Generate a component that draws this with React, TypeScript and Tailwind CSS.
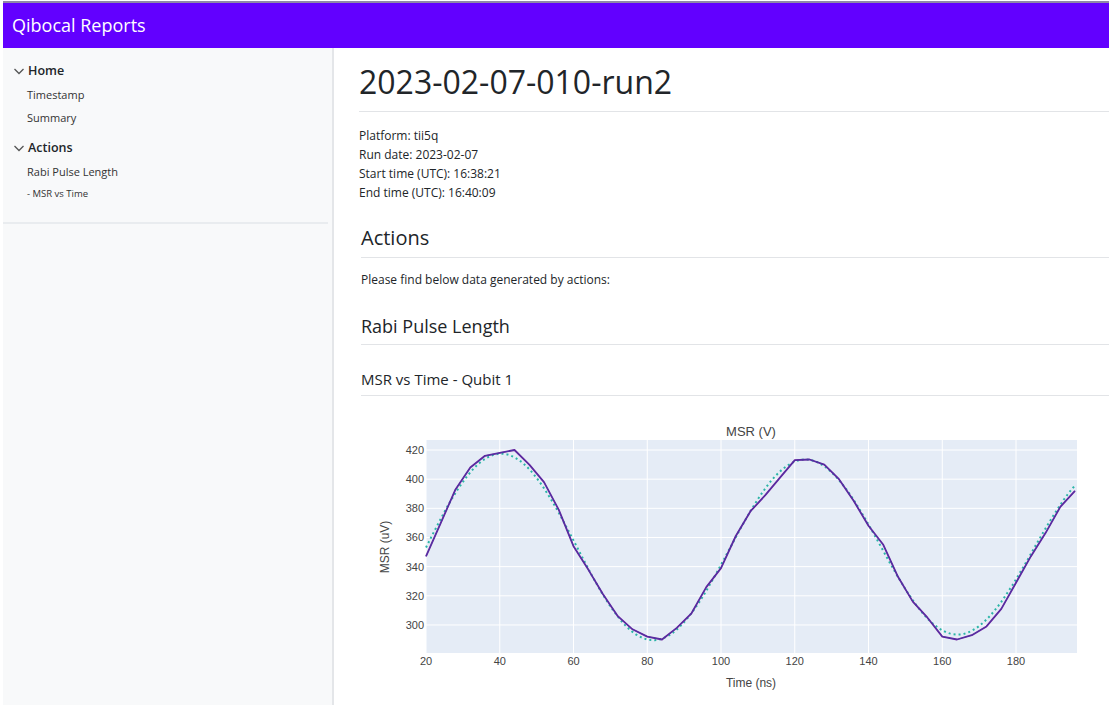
import React from "react"

const data: [number, number][] = [
  [20, 347], [24, 370], [28, 393], [32, 408], [36, 416], [40, 418], [44, 420],
  [48, 410], [52, 398], [56, 379], [60, 354], [64, 338], [68, 321], [72, 306],
  [76, 297], [80, 292], [84, 290], [88, 298], [92, 308], [96, 326], [100, 339],
  [104, 361], [108, 378], [112, 389], [116, 401], [120, 413], [124, 413.5], [128, 410],
  [132, 400], [136, 385], [140, 368], [144, 355], [148, 333], [152, 316], [156, 305],
  [160, 292], [164, 290], [168, 293], [172, 299], [176, 311], [180, 329], [184, 347],
  [188, 363], [192, 381], [196, 392],
]

// page coordinates of the plot area
const px = (t: number) => 426 + (t - 20) * 3.6875
const py = (v: number) => 450 + (420 - v) * 1.458

const fit = (t: number) => {
  const amp = 65 * Math.exp(-(t - 40) / 1300)
  return 352.5 + amp * Math.cos((2 * Math.PI * (t - 40.5)) / 82.5)
}

const dataPath = data.map(([t, v], i) => `${i ? "L" : "M"}${px(t).toFixed(1)},${py(v).toFixed(1)}`).join(" ")
const fitPath = Array.from({ length: 177 }, (_, i) => 20 + i)
  .map((t, i) => `${i ? "L" : "M"}${px(t).toFixed(1)},${py(fit(t)).toFixed(1)}`)
  .join(" ")

const xTicks = [20, 40, 60, 80, 100, 120, 140, 160, 180]
const yTicks = [300, 320, 340, 360, 380, 400, 420]

function Chevron() {
  return (
    <svg width="12" height="12" viewBox="0 0 12 12" className="shrink-0">
      <polyline points="1.5,4 6,8.5 10.5,4" fill="none" stroke="#555" strokeWidth="1.3" />
    </svg>
  )
}

function Chart() {
  return (
    <svg width="747" height="300" className="block">
      <g transform="translate(-361,-405)" fontFamily="'Liberation Sans', Arial, sans-serif">
        <rect x="426" y="440" width="651" height="213" fill="#e5ecf6" />
        {xTicks.map((t) => (
          <line key={t} x1={px(t)} x2={px(t)} y1="440" y2="653" stroke="#fff" strokeWidth="1" />
        ))}
        {yTicks.map((v) => (
          <line key={v} x1="426" x2="1077" y1={py(v)} y2={py(v)} stroke="#fff" strokeWidth="1" />
        ))}
        <path d={fitPath} fill="none" stroke="#2bb5a7" strokeWidth="2" strokeDasharray="2 3" />
        <path d={dataPath} fill="none" stroke="#6a1b9a" strokeWidth="1.8" strokeLinejoin="round" />
        <path d={dataPath} fill="none" stroke="#3949ab" strokeWidth="1" strokeLinejoin="round" opacity="0.6" />
        {xTicks.map((t) => (
          <text key={t} x={px(t)} y="665" fontSize="11" fill="#444" textAnchor="middle">{t}</text>
        ))}
        {yTicks.map((v) => (
          <text key={v} x="424" y={py(v) + 4} fontSize="11" fill="#444" textAnchor="end">{v}</text>
        ))}
        <text x="751" y="436" fontSize="13" fill="#444" textAnchor="middle">MSR (V)</text>
        <text x="751" y="687" fontSize="12" fill="#444" textAnchor="middle">Time (ns)</text>
        <text x="389" y="547" fontSize="12" fill="#444" textAnchor="middle" transform="rotate(-90 389 547)">MSR (uV)</text>
      </g>
    </svg>
  )
}

export default function App() {
  return (
    <div className="w-[1111px] h-[705px] overflow-hidden bg-white pl-[3px] pr-[2px] pt-[1px] font-['Open_Sans',_'Noto_Sans',_sans-serif] text-[#212529]">
      <header className="h-[47px] bg-[#6200ff] border-t-2 border-[#8f88a6] flex items-center px-[9px]">
        <span className="text-white text-[18px]">Qibocal Reports</span>
      </header>
      <div className="flex h-[657px]">
        <aside className="w-[331px] shrink-0 bg-[#f8f9fa] border-r-2 border-[#e4e6e9] pr-[4px]">
          <nav className="pt-[14px] pb-[21px] pl-[10px] border-b-2 border-[#e9ecef]">
            <div className="flex items-center gap-[3px] text-[12.5px] font-semibold leading-[18px]">
              <Chevron />
              Home
            </div>
            <div className="pl-[14px] text-[11px] text-[#333] mt-[7px] leading-[16px]">Timestamp</div>
            <div className="pl-[14px] text-[11px] text-[#333] mt-[7px] leading-[16px]">Summary</div>
            <div className="flex items-center gap-[3px] text-[12.5px] font-semibold leading-[18px] mt-[13px]">
              <Chevron />
              Actions
            </div>
            <div className="pl-[14px] text-[11px] text-[#333] mt-[7px] leading-[16px]">Rabi Pulse Length</div>
            <div className="pl-[14px] text-[9.5px] text-[#333] mt-[7px] leading-[14px]">- MSR vs Time</div>
          </nav>
        </aside>
        <main className="flex-1 pl-[25px]">
          <h1 className="text-[32px] leading-[40px] pt-[14px] pb-[9px] border-b border-[#e2e4e7]">2023-02-07-010-run2</h1>
          <div className="pt-[14px] text-[12px] leading-[19px]">
            <p>Platform: tii5q</p>
            <p>Run date: 2023-02-07</p>
            <p>Start time (UTC): 16:38:21</p>
            <p>End time (UTC): 16:40:09</p>
          </div>
          <div className="pl-[2px]">
            <h2 className="mt-[22px] text-[20px] leading-[28px] pb-[5px] border-b border-[#e2e4e7]">Actions</h2>
            <p className="mt-[13px] text-[12px] leading-[18px]">Please find below data generated by actions:</p>
            <h3 className="mt-[25px] text-[18px] leading-[24px] pb-[6px] border-b border-[#e2e4e7]">Rabi Pulse Length</h3>
            <h4 className="mt-[24px] text-[15px] leading-[20px] pb-[6px] border-b border-[#e2e4e7]">MSR vs Time - Qubit 1</h4>
            <div className="mt-[9px]">
              <Chart />
            </div>
          </div>
        </main>
      </div>
    </div>
  )
}
